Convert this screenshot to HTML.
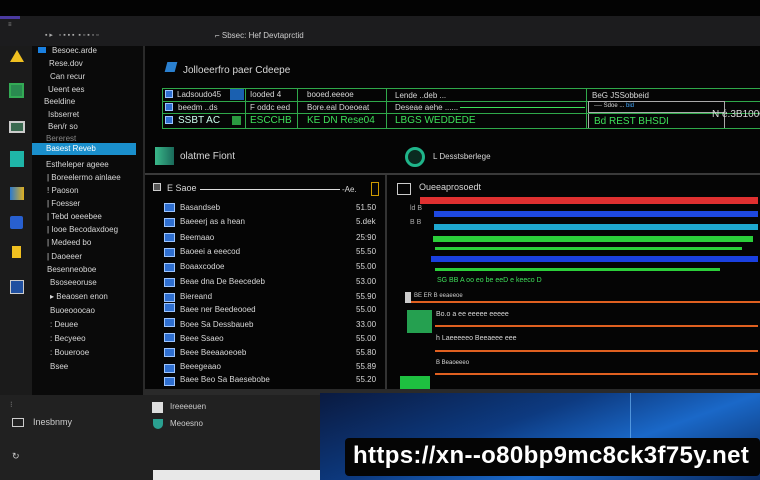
<!DOCTYPE html>
<html><head><meta charset="utf-8"><style>
*{margin:0;padding:0;box-sizing:border-box}
body{width:760px;height:480px;background:#050505;position:relative;overflow:hidden;font-family:"Liberation Sans",sans-serif;color:#ddd}
.a{position:absolute}
.t{position:absolute;font-size:8px;white-space:nowrap;color:#d8d8d8}
.g{color:#3ee05a}
.ic{position:absolute;width:11px;height:9px;background:#2f6fd0;border:1px solid #9cc4ff}
</style></head><body>
<div class="a" style="left:0;top:0;width:760px;height:16px;background:#030303"></div>
<div class="a" style="left:0;top:16px;width:760px;height:30px;background:#1c1c1e"></div>
<div class="a" style="left:0;top:16px;width:20px;height:3px;background:#4a3aa0"></div>
<div class="t" style="left:8px;top:22px;font-size:6px;color:#999">≡</div>
<div class="t" style="left:45px;top:31px;font-size:7px;color:#aaa">▪ ▸ &nbsp; ▫ ▪ ▪ ▪ &nbsp;▪ ▫ ▪ ▫ ▫</div>
<div class="t" style="left:215px;top:31px;font-size:8px;color:#ccc">⌐ Sbsec: Hef Devtaprctid</div>
<div class="a" style="left:0;top:46px;width:32px;height:350px;background:#1b1b1b"></div>
<div class="a" style="left:10px;top:50px;width:0;height:0;border-left:7px solid transparent;border-right:7px solid transparent;border-bottom:12px solid #f0c020"></div>
<div class="a" style="left:9px;top:83px;width:15px;height:15px;background:#2a8a50;border:2px solid #3a5"></div>
<div class="a" style="left:9px;top:121px;width:16px;height:12px;background:#3a6a50;border:2px solid #ccc"></div>
<div class="a" style="left:10px;top:151px;width:14px;height:16px;background:#1fb5a8"></div>
<div class="a" style="left:10px;top:187px;width:14px;height:13px;background:linear-gradient(90deg,#2a7ad0,#e0b020)"></div>
<div class="a" style="left:10px;top:216px;width:13px;height:13px;background:#2860d0;border-radius:2px"></div>
<div class="a" style="left:12px;top:246px;width:9px;height:12px;background:#f0c020"></div>
<div class="a" style="left:10px;top:280px;width:14px;height:14px;background:#2050a0;border:1px solid #ccc"></div>
<div class="a" style="left:32px;top:46px;width:111px;height:350px;background:#0a0a0a"></div>
<div class="a" style="left:38px;top:47px;width:8px;height:6px;background:#1a80e0"></div>
<div class="t" style="left:52px;top:46px">Besoec.arde</div>
<div class="t" style="left:49px;top:59px">Rese.dov</div>
<div class="t" style="left:50px;top:72px">Can recur</div>
<div class="t" style="left:48px;top:85px">Ueent ees</div>
<div class="t" style="left:44px;top:97px">Beeldine</div>
<div class="t" style="left:48px;top:110px">Isbserret</div>
<div class="t" style="left:48px;top:122px">Ben/r so</div>
<div class="t" style="left:46px;top:134px;color:#888">Bererest</div>
<div class="a" style="left:32px;top:143px;width:104px;height:12px;background:#1a8fcc"></div>
<div class="t" style="left:46px;top:144px;color:#fff">Basest Reveb</div>
<div class="t" style="left:46px;top:160px">Estheleper ageee</div>
<div class="t" style="left:47px;top:173px">| Boreelermo ainlaee</div>
<div class="t" style="left:47px;top:186px">! Paoson</div>
<div class="t" style="left:47px;top:199px">| Foesser</div>
<div class="t" style="left:47px;top:212px">| Tebd oeeebee</div>
<div class="t" style="left:47px;top:225px">| Iooe Becodaxdoeg</div>
<div class="t" style="left:47px;top:238px">| Medeed bo</div>
<div class="t" style="left:47px;top:252px">| Daoeeer</div>
<div class="t" style="left:47px;top:265px">Besenneoboe</div>
<div class="t" style="left:50px;top:278px">Bsoseeoruse</div>
<div class="t" style="left:50px;top:292px">▸ Beaosen enon</div>
<div class="t" style="left:50px;top:306px">Buoeooocao</div>
<div class="t" style="left:50px;top:320px">: Deuee</div>
<div class="t" style="left:50px;top:334px">: Becyeeo</div>
<div class="t" style="left:50px;top:348px">: Bouerooe</div>
<div class="t" style="left:50px;top:362px">Bsee</div>
<div class="t" style="left:50px;top:382px">: Leidos</div>
<div class="a" style="left:143px;top:46px;width:2px;height:350px;background:#2a2a2a"></div>
<div class="a" style="left:166px;top:62px;width:10px;height:10px;background:#2a80d0;transform:skewX(-15deg)"></div>
<div class="t" style="left:183px;top:65px;font-size:10px">Jolloeerfro paer Cdeepe</div>
<div class="a" style="left:162px;top:88px;width:600px;height:41px;border:1px solid #2fa84a"></div>
<div class="a" style="left:162px;top:101px;width:600px;height:1px;background:#2fa84a"></div>
<div class="a" style="left:162px;top:113px;width:600px;height:1px;background:#2fa84a"></div>
<div class="a" style="left:245px;top:88px;width:1px;height:41px;background:#2fa84a"></div>
<div class="a" style="left:297px;top:88px;width:1px;height:41px;background:#2fa84a"></div>
<div class="a" style="left:386px;top:88px;width:1px;height:41px;background:#2fa84a"></div>
<div class="a" style="left:586px;top:88px;width:1px;height:41px;background:#2fa84a"></div>
<div class="a" style="left:230px;top:89px;width:14px;height:11px;background:#1a60b0"></div>
<div class="ic" style="left:165px;top:90px;width:8px;height:8px"></div>
<div class="ic" style="left:165px;top:103px;width:8px;height:8px"></div>
<div class="ic" style="left:165px;top:116px;width:8px;height:8px"></div>
<div class="a" style="left:232px;top:116px;width:9px;height:9px;background:#2a9a40"></div>
<div class="t" style="left:177px;top:90px">Ladsoudo45</div>
<div class="t" style="left:178px;top:103px">beedm ..ds</div>
<div class="t g" style="left:178px;top:115px;font-size:10px;color:#cfe">SSBT AC</div>
<div class="t" style="left:250px;top:90px">Iooded 4</div>
<div class="t" style="left:250px;top:103px">F oddc eed</div>
<div class="t g" style="left:250px;top:115px;font-size:10px">ESCCHB</div>
<div class="t" style="left:307px;top:90px">booed.eeeoe</div>
<div class="t" style="left:307px;top:103px">Bore.eal Doeoeat</div>
<div class="t g" style="left:307px;top:115px;font-size:10px">KE DN Rese04</div>
<div class="t" style="left:395px;top:91px">Lende ..deb ...</div>
<div class="t" style="left:395px;top:103px">Deseae aehe ......</div>
<div class="a" style="left:460px;top:107px;width:125px;height:1px;background:#3ee05a"></div>
<div class="t g" style="left:395px;top:115px;font-size:10px">LBGS WEDDEDE</div>
<div class="t" style="left:592px;top:91px">BeG JSSobbeid</div>
<div class="a" style="left:588px;top:101px;width:137px;height:12px;border:1px solid #aaa"></div>
<div class="t" style="left:594px;top:103px;font-size:6px">---- Sdoe ... <span style="color:#4af">bid</span></div>
<div class="a" style="left:588px;top:114px;width:137px;height:14px;border-left:1px solid #aaa;border-right:1px solid #aaa"></div>
<div class="t g" style="left:594px;top:116px;font-size:10px">Bd REST BHSDI</div>
<div class="t" style="left:712px;top:109px;font-size:10px">N é.3B1000</div>
<div class="a" style="left:155px;top:147px;width:19px;height:18px;background:linear-gradient(90deg,#3ab88a,#1a6a5a)"></div>
<div class="t" style="left:180px;top:151px;font-size:10px">olatme Fiont</div>
<div class="a" style="left:405px;top:147px;width:20px;height:20px;border-radius:50%;border:3px solid #1fb58a;background:#0a2a20"></div>
<div class="t" style="left:433px;top:152px;font-size:8px">L Desstsberlege</div>
<div class="a" style="left:145px;top:173px;width:615px;height:2px;background:#3a3a3a"></div>
<div class="a" style="left:153px;top:183px;width:8px;height:8px;border:1px solid #ccc;background:#555"></div>
<div class="t" style="left:167px;top:183px;font-size:9px">E Saoe</div>
<div class="a" style="left:200px;top:189px;width:140px;height:1px;background:#ddd"></div>
<div class="t" style="left:342px;top:185px">-Ae.</div>
<div class="a" style="left:371px;top:182px;width:8px;height:14px;border:1px solid #c90"></div>
<div class="ic" style="left:164px;top:203px"></div><div class="t" style="left:180px;top:203px">Basandseb</div><div class="t" style="left:356px;top:203px">51.50</div>
<div class="ic" style="left:164px;top:218px"></div><div class="t" style="left:180px;top:217px">Baeeerj as a hean</div><div class="t" style="left:356px;top:217px">5.dek</div>
<div class="ic" style="left:164px;top:233px"></div><div class="t" style="left:180px;top:233px">Beemaao</div><div class="t" style="left:356px;top:233px">25:90</div>
<div class="ic" style="left:164px;top:248px"></div><div class="t" style="left:180px;top:247px">Baoeei a eeecod</div><div class="t" style="left:356px;top:247px">55.50</div>
<div class="ic" style="left:164px;top:263px"></div><div class="t" style="left:180px;top:262px">Boaaxcodoe</div><div class="t" style="left:356px;top:262px">55.00</div>
<div class="ic" style="left:164px;top:278px"></div><div class="t" style="left:180px;top:277px">Beae dna De Beecedeb</div><div class="t" style="left:356px;top:277px">53.00</div>
<div class="ic" style="left:164px;top:293px"></div><div class="t" style="left:180px;top:292px">Biereand</div><div class="t" style="left:356px;top:292px">55.90</div>
<div class="ic" style="left:164px;top:303px"></div><div class="t" style="left:180px;top:305px">Baee ner Beedeooed</div><div class="t" style="left:356px;top:305px">55.00</div>
<div class="ic" style="left:164px;top:318px"></div><div class="t" style="left:180px;top:320px">Boee Sa Dessbaueb</div><div class="t" style="left:356px;top:320px">33.00</div>
<div class="ic" style="left:164px;top:333px"></div><div class="t" style="left:180px;top:334px">Beee Ssaeo</div><div class="t" style="left:356px;top:334px">55.00</div>
<div class="ic" style="left:164px;top:348px"></div><div class="t" style="left:180px;top:348px">Beee Beeaaoeoeb</div><div class="t" style="left:356px;top:348px">55.80</div>
<div class="ic" style="left:164px;top:364px"></div><div class="t" style="left:180px;top:362px">Beeegeaao</div><div class="t" style="left:356px;top:362px">55.89</div>
<div class="ic" style="left:164px;top:377px"></div><div class="t" style="left:180px;top:375px">Baee Beo Sa Baesebobe</div><div class="t" style="left:356px;top:375px">55.20</div>
<div class="a" style="left:385px;top:175px;width:2px;height:215px;background:#333"></div>
<div class="a" style="left:397px;top:183px;width:14px;height:12px;border:1px solid #ccc"></div>
<div class="t" style="left:419px;top:182px;font-size:9px">Oueeaprosoedt</div>
<div class="a" style="left:420px;top:197px;width:338px;height:7px;background:#e03030"></div>
<div class="a" style="left:434px;top:211px;width:324px;height:6px;background:#1e48e0"></div>
<div class="a" style="left:434px;top:224px;width:324px;height:6px;background:#1ea8d0"></div>
<div class="a" style="left:433px;top:236px;width:320px;height:6px;background:#2bcf3a"></div>
<div class="a" style="left:435px;top:247px;width:307px;height:3px;background:#2bcf3a"></div>
<div class="a" style="left:431px;top:256px;width:327px;height:6px;background:#1a40e0"></div>
<div class="a" style="left:435px;top:268px;width:285px;height:3px;background:#2bcf3a"></div>
<div class="t" style="left:437px;top:277px;font-size:7px;color:#3ee05a">SG BB A oo eo be eeD e keeco D</div>
<div class="t" style="left:410px;top:205px;font-size:7px;color:#aaa">ld B<br><br>B B</div>
<div class="a" style="left:405px;top:292px;width:6px;height:11px;background:#ccc"></div>
<div class="a" style="left:411px;top:301px;width:349px;height:2px;background:#e06020"></div>
<div class="t" style="left:414px;top:293px;font-size:6px;color:#ccc">BE ER B eeaeeoe</div>
<div class="a" style="left:407px;top:310px;width:25px;height:23px;background:#25a050"></div>
<div class="t" style="left:436px;top:311px;font-size:7px">Bo.o a ee eeeee eeeee</div>
<div class="a" style="left:435px;top:325px;width:323px;height:2px;background:#e06020"></div>
<div class="t" style="left:436px;top:335px;font-size:7px">h Laeeeeeo Beeaeee eee</div>
<div class="a" style="left:435px;top:350px;width:323px;height:2px;background:#e06020"></div>
<div class="t" style="left:436px;top:360px;font-size:6px">B Beaoeeeo</div>
<div class="a" style="left:435px;top:373px;width:323px;height:2px;background:#e06020"></div>
<div class="a" style="left:400px;top:376px;width:30px;height:14px;background:#1ec040"></div>
<div class="a" style="left:145px;top:389px;width:615px;height:6px;background:#2a2a2a"></div>
<div class="a" style="left:0;top:395px;width:320px;height:85px;background:#212121"></div>
<div class="a" style="left:32px;top:380px;width:65px;height:15px;background:#0a0a0a"></div>
<div class="a" style="left:320px;top:393px;width:440px;height:87px;background:linear-gradient(160deg,#0a1a40 0%,#0d3a80 40%,#1a68c8 65%,#0a2a60 100%)"></div>
<div class="a" style="left:630px;top:393px;width:110px;height:50px;border-left:1px solid #6ab0f0;border-bottom:1px solid #4a90e0;opacity:.7"></div>
<div class="t" style="left:10px;top:400px;color:#888">⁝</div>
<div class="a" style="left:12px;top:418px;width:12px;height:9px;border:1px solid #ccc"></div>
<div class="t" style="left:33px;top:417px;font-size:9px;color:#ccc">Inesbnmy</div>
<div class="t" style="left:12px;top:451px;font-size:9px;color:#ccc">↻</div>
<div class="a" style="left:152px;top:402px;width:11px;height:11px;background:#ddd"></div>
<div class="t" style="left:170px;top:402px;color:#ccc">Ireeeeuen</div>
<div class="a" style="left:153px;top:419px;width:10px;height:10px;border-radius:0 0 5px 5px;background:#2aa090"></div>
<div class="t" style="left:170px;top:419px;color:#ccc">Meoesno</div>
<div class="a" style="left:153px;top:470px;width:167px;height:10px;background:#e8e8e8"></div>
<div class="a" style="left:345px;top:438px;width:415px;height:38px;background:#050505;border-radius:4px"></div>
<div class="t" style="left:353px;top:442px;font-size:24px;letter-spacing:0.35px;font-weight:bold;color:#fff">https://xn--o80bp9mc8ck3f75y.net</div>
</body></html>
